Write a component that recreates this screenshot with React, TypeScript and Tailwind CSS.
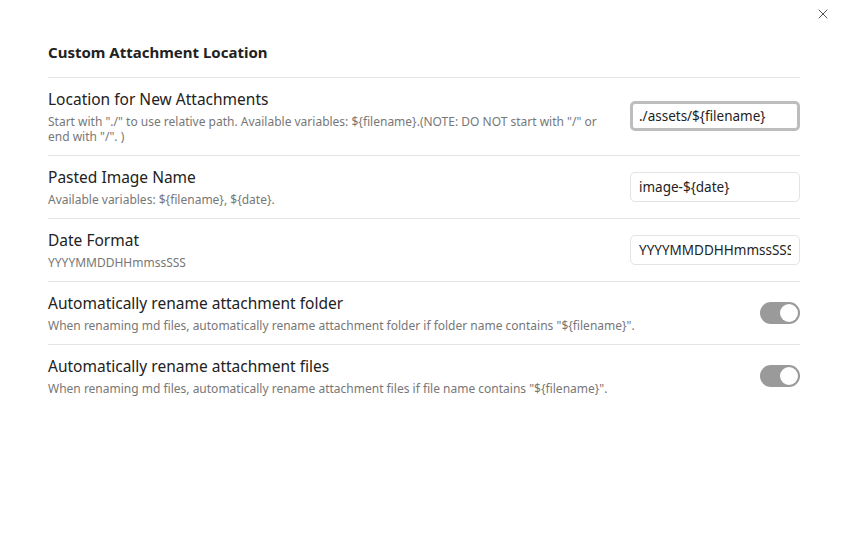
import { X } from "lucide-react";

type Setting = {
  name: string;
  desc: string;
  kind: "text" | "toggle";
  value?: string;
  focused?: boolean;
};

const settings: Setting[] = [
  {
    name: "Location for New Attachments",
    desc: 'Start with "./" to use relative path. Available variables: ${filename}.(NOTE: DO NOT start with "/" or end with "/". )',
    kind: "text",
    value: "./assets/${filename}",
    focused: true
  },
  {
    name: "Pasted Image Name",
    desc: "Available variables: ${filename}, ${date}.",
    kind: "text",
    value: "image-${date}"
  },
  {
    name: "Date Format",
    desc: "YYYYMMDDHHmmssSSS",
    kind: "text",
    value: "YYYYMMDDHHmmssSSS"
  },
  {
    name: "Automatically rename attachment folder",
    desc: 'When renaming md files, automatically rename attachment folder if folder name contains "${filename}".',
    kind: "toggle"
  },
  {
    name: "Automatically rename attachment files",
    desc: 'When renaming md files, automatically rename attachment files if file name contains "${filename}".',
    kind: "toggle"
  }
];

function Toggle() {
  return (
    <div className="flex h-[22px] w-[40px] items-center justify-end rounded-full bg-[#9a9a9a] px-[2px]">
      <div className="h-[18px] w-[18px] rounded-full bg-white" />
    </div>
  );
}

function SettingRow({ setting }: { setting: Setting }) {
  return (
    <div className="flex items-center border-t border-[#e4e4e4] pb-[11px] pt-[10px]">
      <div className="mr-[20px] flex-1">
        <div className="text-[15.5px] leading-[22px] text-[#222]">{setting.name}</div>
        <div className="mt-[4px] text-[12px] leading-[15px] text-[#777]">{setting.desc}</div>
      </div>
      {setting.kind === "text" ? (
        <input
          readOnly
          value={setting.value}
          className={
            setting.focused
              ? "h-[30px] w-[170px] rounded-[5px] border-[3px] border-[#bdbdbd] px-[6px] text-[13.5px] text-[#222] outline-none"
              : "h-[30px] w-[170px] rounded-[5px] border border-[#e3e3e3] px-[8px] text-[13.5px] text-[#222] outline-none"
          }
        />
      ) : (
        <Toggle />
      )}
    </div>
  );
}

export default function App() {
  return (
    <div
      className="relative h-[554px] w-[847px] bg-white"
      style={{ fontFamily: '"Noto Sans", "Open Sans", sans-serif' }}
    >
      <button className="absolute right-[16px] top-[6px] text-[#555]">
        <X size={16} strokeWidth={1.5} />
      </button>
      <div className="pl-[48px] pr-[47px] pt-[42px]">
        <h2 className="pb-[15px] text-[15px] font-bold leading-[20px] text-[#222]">
          Custom Attachment Location
        </h2>
        {settings.map((s) => (
          <SettingRow key={s.name} setting={s} />
        ))}
      </div>
    </div>
  );
}
